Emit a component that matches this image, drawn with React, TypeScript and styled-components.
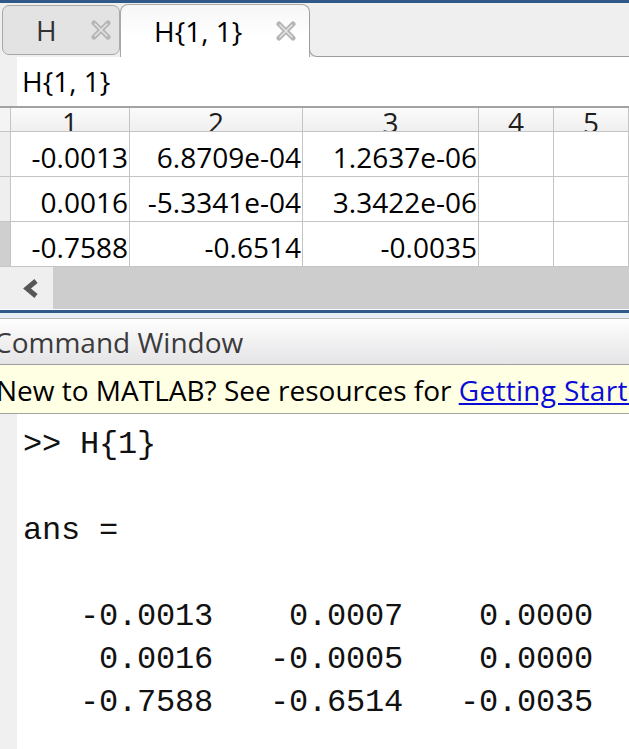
import React from 'react';
import styled, { createGlobalStyle } from 'styled-components';

const GlobalStyle = createGlobalStyle`
  html, body {
    margin: 0;
    padding: 0;
    background: #ffffff;
  }
`;

const columns = ['1', '2', '3', '4', '5'];

const cells: string[][] = [
  ['-0.0013', '6.8709e-04', '1.2637e-06', '', ''],
  ['0.0016', '-5.3341e-04', '3.3422e-06', '', ''],
  ['-0.7588', '-0.6514', '-0.0035', '', ''],
];

const commandLines = [
  '>> H{1}',
  '',
  'ans =',
  '',
  '   -0.0013    0.0007    0.0000',
  '    0.0016   -0.0005    0.0000',
  '   -0.7588   -0.6514   -0.0035',
];

const CloseIcon = () => (
  <svg width="20" height="20" viewBox="0 0 20 20">
    <g strokeLinecap="round">
      <line x1="3" y1="3" x2="17" y2="17" stroke="#b4b4b4" strokeWidth="5" />
      <line x1="17" y1="3" x2="3" y2="17" stroke="#b4b4b4" strokeWidth="5" />
      <line x1="4" y1="4" x2="16" y2="16" stroke="#e2e2e2" strokeWidth="1.6" />
      <line x1="16" y1="4" x2="4" y2="16" stroke="#e2e2e2" strokeWidth="1.6" />
    </g>
  </svg>
);

const ChevronLeft = () => (
  <svg width="17" height="19" viewBox="0 0 17 19">
    <polyline
      points="14,2 5,9.5 14,17"
      fill="none"
      stroke="#575757"
      strokeWidth="5"
      strokeLinejoin="miter"
    />
  </svg>
);

export default function App() {
  return (
    <Screen>
      <GlobalStyle />
      <BlueRule />
      <TabStrip>
        <Tab>
          <TabLabel>H</TabLabel>
          <CloseIcon />
        </Tab>
        <Tab $active>
          <TabLabel $active>H{'{'}1, 1{'}'}</TabLabel>
          <CloseIcon />
        </Tab>
        <TabFiller />
      </TabStrip>

      <NameRow>
        <Gutter />
        <VariableName>H{'{'}1, 1{'}'}</VariableName>
      </NameRow>

      <Grid>
        <RowHead $header />
        {columns.map((c) => (
          <HeadCell key={c}>{c}</HeadCell>
        ))}
        {cells.map((row, r) => (
          <React.Fragment key={r}>
            <RowHead $selected={r === 2} />
            {row.map((v, i) => (
              <DataCell key={i}>{v}</DataCell>
            ))}
          </React.Fragment>
        ))}
      </Grid>

      <ScrollBar>
        <ScrollButton>
          <ChevronLeft />
        </ScrollButton>
      </ScrollBar>

      <BlueRule />
      <PanelBand />
      <TitleBar>Command Window</TitleBar>
      <Banner>
        New to MATLAB? See resources for <BannerLink href="#">Getting Started</BannerLink>.
      </Banner>

      <CommandArea>
        <Gutter />
        <CommandText>{commandLines.join('\n')}</CommandText>
      </CommandArea>
    </Screen>
  );
}

const Screen = styled.div`
  width: 629px;
  height: 749px;
  overflow: hidden;
  display: flex;
  flex-direction: column;
  font-family: 'Open Sans', 'Noto Sans', sans-serif;
  font-size: 28px;
  color: #000;
`;

const BlueRule = styled.div`
  height: 3px;
  flex: none;
  background: #2f5987;
`;

const TabStrip = styled.div`
  height: 54px;
  flex: none;
  display: flex;
  align-items: flex-end;
  padding-left: 2px;
  background: #efeff0;
`;

const Tab = styled.div<{ $active?: boolean }>`
  box-sizing: border-box;
  flex: none;
  width: ${(p) => (p.$active ? '190px' : '118px')};
  height: ${(p) => (p.$active ? '53px' : '50px')};
  margin-bottom: ${(p) => (p.$active ? '0' : '2px')};
  display: flex;
  align-items: center;
  gap: 34px;
  padding-left: 33px;
  border: 1px solid #a8a8a8;
  border-bottom: ${(p) => (p.$active ? 'none' : '1px solid #a8a8a8')};
  border-radius: ${(p) => (p.$active ? '8px 8px 0 0' : '7px')};
  background: ${(p) =>
    p.$active ? 'linear-gradient(#f6f6f7, #ffffff 60%)' : '#e3e3e4'};
  svg {
    flex: none;
  }
`;

const TabLabel = styled.span<{ $active?: boolean }>`
  line-height: 38px;
  color: ${(p) => (p.$active ? '#000' : '#333')};
  white-space: nowrap;
`;

const TabFiller = styled.div`
  flex: 1;
  align-self: stretch;
  margin-top: 10px;
  margin-left: -1px;
  border-left: 1px solid #9c9c9c;
  border-bottom: 1px solid #9c9c9c;
  border-bottom-left-radius: 8px;
`;

const NameRow = styled.div`
  height: 49px;
  flex: none;
  display: flex;
`;

const Gutter = styled.div`
  width: 17px;
  flex: none;
  background: #f0f0f0;
`;

const VariableName = styled.div`
  margin-left: 5px;
  padding-top: 5px;
  line-height: 38px;
`;

const Grid = styled.div`
  flex: none;
  display: grid;
  grid-template-columns: 11px 119px 173px 176px 75px 75px;
  grid-template-rows: 24px 45px 45px 45px;
  border-top: 2px solid #a2a2a2;
`;

const RowHead = styled.div<{ $header?: boolean; $selected?: boolean }>`
  box-sizing: border-box;
  border-right: 1px solid #c4c4c4;
  border-bottom: 1px solid #c4c4c4;
  background: ${(p) => (p.$selected ? '#cfcfcf' : p.$header ? '#f4f4f4' : '#efefef')};
`;

const HeadCell = styled.div`
  box-sizing: border-box;
  overflow: hidden;
  text-align: center;
  line-height: 28px;
  color: #1e1e1e;
  border-right: 1px solid #c4c4c4;
  border-bottom: 1px solid #c4c4c4;
  background: linear-gradient(#fbfbfb, #efefef);
`;

const DataCell = styled.div`
  box-sizing: border-box;
  overflow: hidden;
  text-align: right;
  white-space: nowrap;
  padding: 5px 1px 0 0;
  line-height: 40px;
  border-right: 1px solid #c4c4c4;
  border-bottom: 1px solid #c4c4c4;
  background: #fff;
`;

const ScrollBar = styled.div`
  height: 42px;
  flex: none;
  display: flex;
  background: #cdcdcd;
  margin-bottom: 1px;
`;

const ScrollButton = styled.div`
  width: 53px;
  display: flex;
  align-items: center;
  justify-content: center;
  padding-left: 8px;
  box-sizing: border-box;
  background: #efefef;
`;

const PanelBand = styled.div`
  height: 5px;
  flex: none;
  background: #e8edf3;
  border-bottom: 1px solid #b9b9b9;
`;

const TitleBar = styled.div`
  box-sizing: border-box;
  height: 46px;
  flex: none;
  padding-top: 4px;
  line-height: 38px;
  text-indent: -6px;
  white-space: nowrap;
  color: #3b3b3b;
  background: linear-gradient(#fefefe, #e4e4e6);
  border-bottom: 1px solid #a0a0a0;
`;

const Banner = styled.div`
  box-sizing: border-box;
  height: 49px;
  flex: none;
  padding-top: 6px;
  line-height: 38px;
  text-indent: -4px;
  white-space: nowrap;
  background: #ffffe3;
  border-bottom: 1px solid #a2a2a2;
`;

const BannerLink = styled.a`
  color: #0b0bd6;
  text-decoration: underline;
  letter-spacing: 0.3px;
`;

const CommandArea = styled.div`
  flex: 1;
  display: flex;
  background: #fff;
`;

const CommandText = styled.pre`
  margin: 0 0 0 6px;
  padding-top: 9px;
  font-family: 'Liberation Mono', 'Courier New', monospace;
  font-size: 32px;
  letter-spacing: -0.2px;
  line-height: 43px;
  color: #111;
`;
